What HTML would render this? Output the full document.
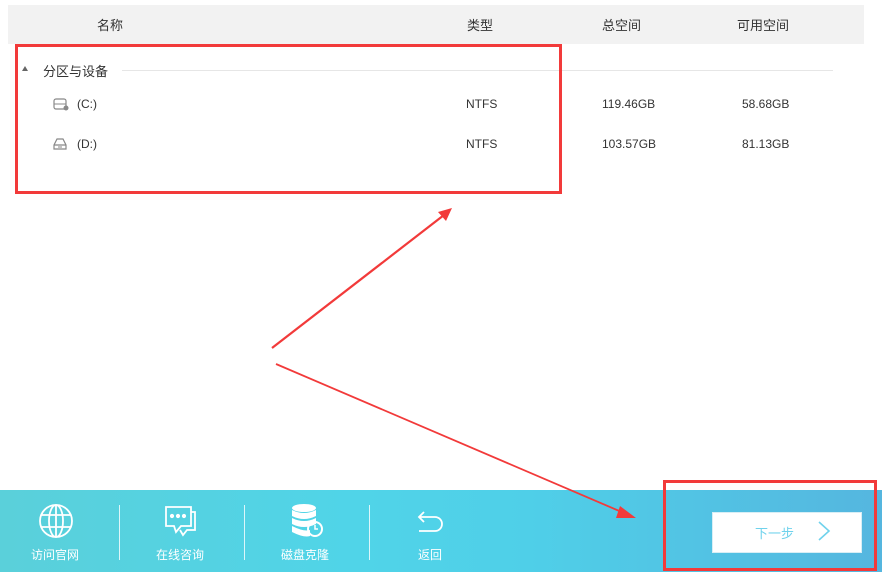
<!DOCTYPE html>
<html><head><meta charset="utf-8"><style>
*{margin:0;padding:0;box-sizing:border-box}
body{width:884px;height:574px;background:#fff;position:relative;overflow:hidden;font-family:"Liberation Sans","Noto Sans CJK SC",sans-serif;color:#333}
.a{position:absolute;white-space:nowrap}
.hd{position:absolute;left:8px;top:5px;width:856px;height:39px;background:#f2f2f2}
.h{font-size:13px;top:15px;color:#333}
.r{font-size:12px;color:#333}
.bar{position:absolute;left:0;top:490px;width:882px;height:82px;background:linear-gradient(90deg,#5ad0da 0%,#50d4e8 40%,#4fcfe8 60%,#55b6df 100%)}
.lab{font-size:12px;color:#fff;top:546px}
.sep{position:absolute;top:505px;width:1px;height:55px;background:rgba(255,255,255,.8)}
</style></head><body>
<div class="hd"></div>
<div class="a h" style="left:97px">名称</div>
<div class="a h" style="left:467px">类型</div>
<div class="a h" style="left:602px">总空间</div>
<div class="a h" style="left:737px">可用空间</div>

<div class="a" style="left:22px;top:66px;width:0;height:0;border-left:3px solid transparent;border-right:3px solid transparent;border-bottom:5px solid #666"></div>
<div class="a" style="left:43px;top:61px;font-size:13px;color:#333">分区与设备</div>
<div class="a" style="left:122px;top:70px;width:711px;height:1px;background:#e6e6e6"></div>

<svg class="a" style="left:53px;top:97px" width="16" height="14" viewBox="0 0 16 14"><rect x="1" y="2" width="12" height="10" rx="2" fill="none" stroke="#888" stroke-width="1.2"/><line x1="1" y1="7" x2="13" y2="7" stroke="#888"/><circle cx="13" cy="11" r="2.5" fill="#888"/></svg>
<div class="a r" style="left:77px;top:97px">(C:)</div>
<div class="a r" style="left:466px;top:97px">NTFS</div>
<div class="a r" style="left:602px;top:97px">119.46GB</div>
<div class="a r" style="left:742px;top:97px">58.68GB</div>

<svg class="a" style="left:53px;top:137px" width="16" height="14" viewBox="0 0 16 14"><path d="M1 12V8L4 2H10L13 8V12Z M1 8H13" fill="none" stroke="#888" stroke-width="1.2"/><line x1="5" y1="10" x2="9" y2="10" stroke="#888"/></svg>
<div class="a r" style="left:77px;top:137px">(D:)</div>
<div class="a r" style="left:466px;top:137px">NTFS</div>
<div class="a r" style="left:602px;top:137px">103.57GB</div>
<div class="a r" style="left:742px;top:137px">81.13GB</div>

<div class="a" style="left:15px;top:44px;width:547px;height:150px;border:3px solid #f23a3a"></div>

<div class="bar"></div>
<svg class="a" style="left:38px;top:503px" width="36" height="36" viewBox="0 0 36 36" fill="none" stroke="#fff" stroke-width="1.8"><circle cx="18" cy="18" r="16"/><ellipse cx="18" cy="18" rx="7" ry="16"/><line x1="18" y1="2" x2="18" y2="34"/><line x1="3" y1="12" x2="33" y2="12"/><line x1="3" y1="24" x2="33" y2="24"/></svg>
<div class="a lab" style="left:31px">访问官网</div>
<div class="sep" style="left:119px"></div>
<svg class="a" style="left:163px;top:504px" width="36" height="34" viewBox="0 0 36 34" fill="none" stroke="#fff" stroke-width="1.8"><path d="M3 3H28V22H18L13 28L11 22H3Z"/><path d="M28 8H32V26H24L20 31L17 26"/><circle cx="9" cy="12" r="1.2" fill="#fff"/><circle cx="15" cy="12" r="1.2" fill="#fff"/><circle cx="21" cy="12" r="1.2" fill="#fff"/></svg>
<div class="a lab" style="left:156px">在线咨询</div>
<div class="sep" style="left:244px"></div>
<svg class="a" style="left:290px;top:503px" width="34" height="36" viewBox="0 0 34 36" fill="#fff"><ellipse cx="14" cy="5" rx="12" ry="4"/><path d="M2 7Q14 13 26 7V13Q14 19 2 13Z"/><path d="M2 15Q14 21 26 15V21Q14 27 2 21Z"/><path d="M2 23Q14 29 20 27V33Q14 35 2 29Z"/><circle cx="25" cy="26" r="7" fill="none" stroke="#fff" stroke-width="2"/><path d="M25 22V26H28" stroke="#fff" fill="none" stroke-width="1.5"/></svg>
<div class="a lab" style="left:281px">磁盘克隆</div>
<div class="sep" style="left:369px"></div>
<svg class="a" style="left:415px;top:510px" width="30" height="24" viewBox="0 0 30 24" fill="none" stroke="#fff" stroke-width="1.8"><path d="M4 7H20A7 7 0 0 1 20 21H4"/><path d="M9 2L4 7L9 12"/></svg>
<div class="a lab" style="left:418px">返回</div>

<div class="a" style="left:712px;top:512px;width:150px;height:41px;background:#fff;border:1px solid #d8eef5"></div>
<div class="a" style="left:755px;top:523px;font-size:13px;color:#6fd2ec">下一步</div>
<svg class="a" style="left:817px;top:520px" width="14" height="22" viewBox="0 0 14 22" fill="none" stroke="#6fd2ec" stroke-width="1.6"><path d="M2 2L12 11L2 20"/></svg>
<div class="a" style="left:663px;top:480px;width:214px;height:91px;border:3px solid #f23a3a"></div>

<svg class="a" style="left:0;top:0" width="884" height="574">
<line x1="272" y1="348" x2="444" y2="215" stroke="#f23a3a" stroke-width="2.2"/>
<polygon points="452,208 438,212 446,221" fill="#f23a3a"/>
<line x1="276" y1="364" x2="624" y2="513" stroke="#f23a3a" stroke-width="1.8"/>
<polygon points="636,518 620,506 616,518" fill="#f23a3a"/>
</svg>
</body></html>
